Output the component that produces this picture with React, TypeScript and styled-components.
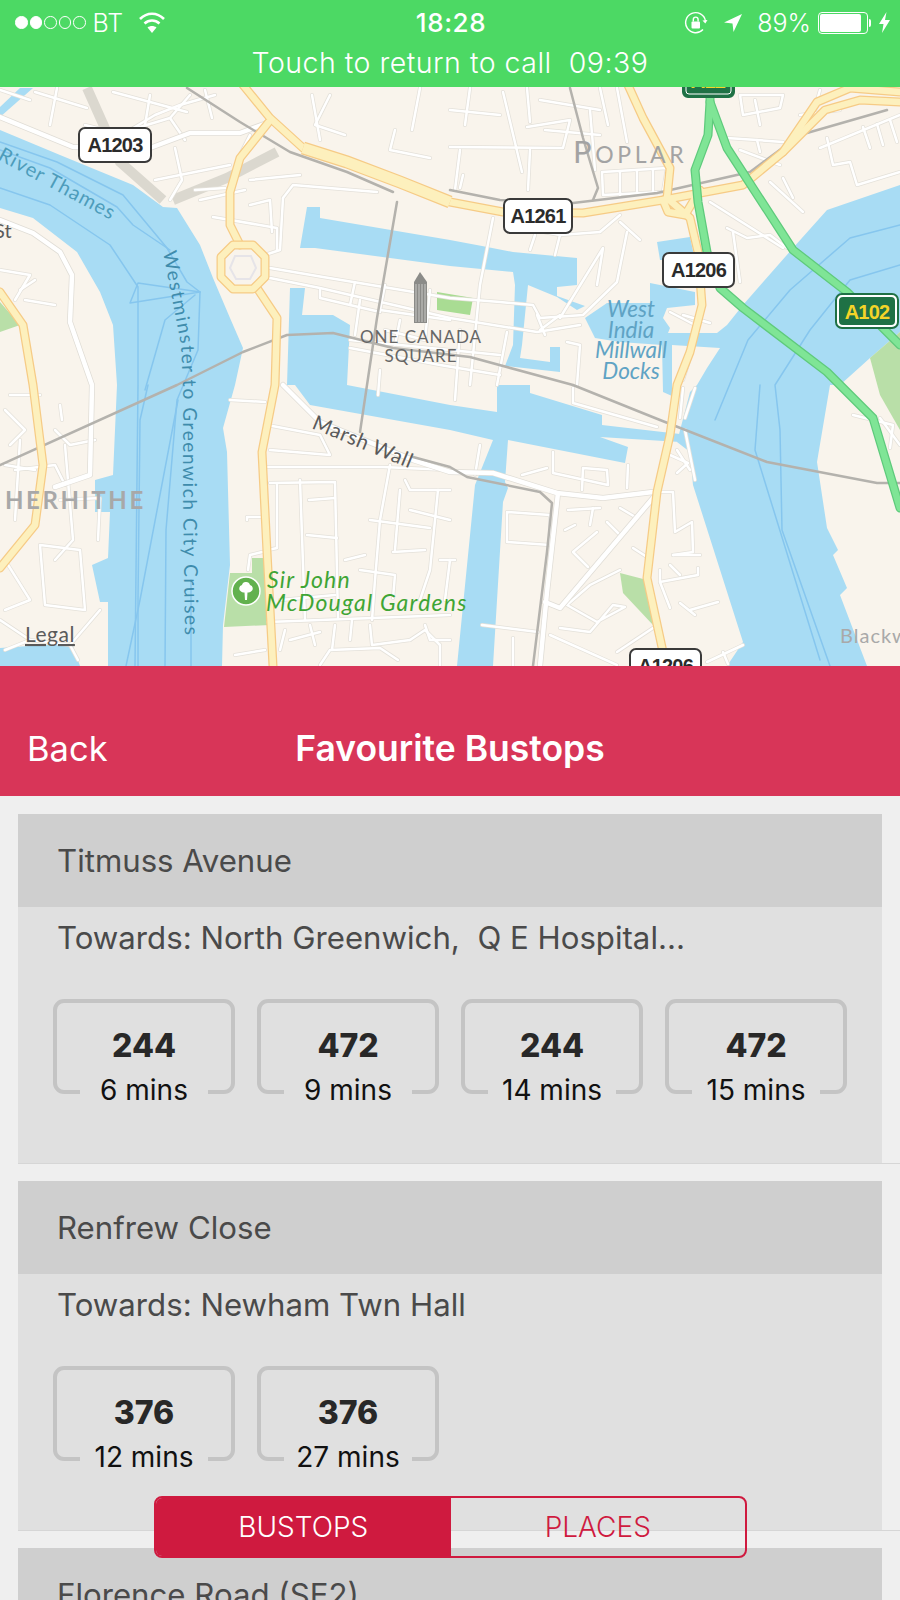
import React from "react";
import styled, { createGlobalStyle } from "styled-components";

const GlobalStyle = createGlobalStyle`
  html, body {
    margin: 0;
    padding: 0;
    background: #efefef;
    font-family: Inter, "Liberation Sans", sans-serif;
  }
`;

const Page = styled.div`
  position: relative;
  width: 900px;
  height: 1600px;
  overflow: hidden;
  background: #efefef;
`;

const CallBar = styled.div`
  height: 87px;
  background: #4cd964;
  color: #fff;
  display: flex;
  flex-direction: column;
`;

const StatusRow = styled.div`
  height: 45px;
  display: grid;
  grid-template-columns: 1fr auto 1fr;
  align-items: center;
  padding: 0 10px 0 15px;
`;

const StatusGroup = styled.div<{ $end?: boolean }>`
  display: flex;
  align-items: center;
  justify-content: ${(p) => (p.$end ? "flex-end" : "flex-start")};
`;

const Dot = styled.span<{ $on?: boolean }>`
  width: 12.5px;
  height: 12.5px;
  margin-right: 2px;
  border-radius: 50%;
  box-sizing: border-box;
  border: 1px solid #fff;
  background: ${(p) => (p.$on ? "#fff" : "transparent")};
`;

const Carrier = styled.span`
  font-size: 25px;
  font-weight: 300;
  margin: 0 15px 0 5px;
`;

const Clock = styled.span`
  font-size: 26px;
  font-weight: 500;
  letter-spacing: 0.6px;
  margin-left: -3px;
`;

const Percent = styled.span`
  font-size: 25px;
  font-weight: 300;
  margin: 0 7px 0 15px;
`;

const Battery = styled.span`
  position: relative;
  box-sizing: border-box;
  width: 50px;
  height: 22px;
  padding: 1px;
  border: 1px solid #fff;
  border-radius: 4px;
  display: block;
  margin-right: 11px;

  &::before {
    content: "";
    display: block;
    height: 100%;
    width: 90%;
    background: #fff;
    border-radius: 2px;
  }

  &::after {
    content: "";
    position: absolute;
    right: -4px;
    top: 6px;
    width: 2px;
    height: 8px;
    background: #fff;
    border-radius: 0 2px 2px 0;
  }
`;

const CallText = styled.div`
  text-align: center;
  font-size: 28.5px;
  line-height: 36px;
  font-weight: 300;
  letter-spacing: 0.5px;
  white-space: pre;
`;

const MapFrame = styled.div`
  height: 579px;
  background: #f9f4ec;
  overflow: hidden;

  svg {
    display: block;
  }
`;

const MapLabel = styled.text<{
  $size: number;
  $color: string;
  $italic?: boolean;
  $weight?: number;
  $spacing?: number;
}>`
  font-family: Lato, "Open Sans", sans-serif;
  font-size: ${(p) => p.$size}px;
  fill: ${(p) => p.$color};
  font-style: ${(p) => (p.$italic ? "italic" : "normal")};
  font-weight: ${(p) => p.$weight ?? 400};
  letter-spacing: ${(p) => p.$spacing ?? 0}px;
`;

const SignText = styled.text<{ $color: string }>`
  font-family: "Liberation Sans", sans-serif;
  font-size: 20px;
  font-weight: 700;
  letter-spacing: -0.8px;
  text-anchor: middle;
  fill: ${(p) => p.$color};
`;

const NavBar = styled.header`
  height: 130px;
  box-sizing: border-box;
  background: #d83558;
  color: #fff;
  display: grid;
  grid-template-columns: 1fr auto 1fr;
  align-items: end;
  padding: 0 27px 25px;
`;

const BackLink = styled.span`
  font-size: 34.5px;
  line-height: 44px;
  font-weight: 400;
`;

const NavTitle = styled.h1`
  margin: 0;
  font-size: 35.5px;
  line-height: 44px;
  font-weight: 600;
`;

const List = styled.main`
  padding: 18px 0 0 18px;
  display: flex;
  flex-direction: column;
  gap: 17px;
`;

const StopRow = styled.section`
  border-bottom: 1px solid #d6d6d6;
  padding-right: 18px;
`;

const StopCard = styled.div`
  height: 349px;
  background: #e0e0e0;
`;

const StopName = styled.div`
  height: 93px;
  padding-left: 39px;
  display: flex;
  align-items: center;
  background: #cfcfcf;
  color: #4a4a4a;
  font-size: 31.2px;
`;

const Towards = styled.div`
  height: 62px;
  padding-left: 39px;
  display: flex;
  align-items: center;
  color: #4a4a4a;
  font-size: 31.2px;
  white-space: pre;
`;

const Departures = styled.div`
  display: flex;
  gap: 22px;
  margin: 30px 0 0 35px;
`;

const Departure = styled.div`
  position: relative;
  box-sizing: border-box;
  width: 182px;
  height: 95px;
  border: 4px solid #c4c4c4;
  border-radius: 11px;
  text-align: center;
`;

const Route = styled.div`
  margin-top: 25px;
  font-size: 32px;
  line-height: 36px;
  font-weight: 800;
  color: #282828;
`;

const Minutes = styled.div`
  position: absolute;
  left: 23px;
  right: 23px;
  bottom: -18px;
  height: 36px;
  line-height: 36px;
  background: #e0e0e0;
  color: #111;
  font-size: 28px;
`;

const Segments = styled.div`
  position: absolute;
  left: 154px;
  top: 1496px;
  width: 593px;
  height: 62px;
  box-sizing: border-box;
  display: flex;
  border: 2px solid #cf1a3f;
  border-radius: 8px;
  overflow: hidden;
`;

const Segment = styled.div<{ $active?: boolean }>`
  flex: 1;
  display: flex;
  align-items: center;
  justify-content: center;
  font-size: 28px;
  font-weight: 300;
  color: ${(p) => (p.$active ? "#fff" : "#cf1a3f")};
  background: ${(p) => (p.$active ? "#cf1a3f" : "transparent")};
`;

const WATER = [
  "M0,130 L60,155 L133,185 L163,207 L177,208 L200,245 L213,278 L230,318 L243,348 L235,385 L223,428 L227,452 L230,565 L223,625 L222,666 L108,666 L108,602 L100,602 L92,565 L108,558 L110,512 L95,512 L95,480 L113,475 L117,385 L113,325 L100,292 L77,252 L33,218 L0,208 Z",
  "M0,107 L20,88 L33,88 L0,117 Z",
  "M0,648 L72,643 L80,666 L0,666 Z",
  "M900,185 L827,210 L793,248 L743,305 L727,325 L717,333 L720,348 L707,368 L697,385 L690,392 L677,442 L690,452 L693,485 L743,642 L727,666 L867,666 L840,595 L847,588 L833,555 L838,550 L827,528 L817,462 L830,385 L840,385 L870,358 L900,332 Z",
  "M307,207 L320,207 L320,218 L450,240 L482,246 L513,252 L577,258 L577,285 L557,287 L557,296 L585,306 L577,310 L557,297 L528,285 L522,345 L520,358 L550,362 L550,347 L560,347 L560,372 L505,366 L513,345 L515,285 L513,272 L450,266 L315,248 L300,248 Z",
  "M290,288 L305,288 L302,315 L333,315 L350,325 L347,385 L450,405 L497,412 L497,385 L530,385 L530,393 L602,415 L602,425 L680,434 L680,442 L600,437 L628,447 L625,463 L508,440 L505,482 L508,488 L503,502 L493,666 L457,666 L475,485 L493,440 L450,430 L310,405 L295,385 L287,385 Z",
  "M585,318 L607,303 L650,303 L650,283 L695,292 L695,305 L667,308 L663,318 L670,328 L668,333 L720,333 L720,348 L672,345 L672,396 L663,392 L662,345 L620,342 L595,338 Z",
  "M657,242 L690,237 L695,260 L660,260 Z",
];

const PARKS = [
  "M230,573 L252,573 L252,558 L265,558 L270,625 L224,627 Z",
  "M0,302 L20,325 L0,332 Z",
  "M620,573 L647,580 L653,625 L623,593 Z",
  "M870,358 L900,332 L900,430 L880,395 Z",
];

const SHIP_LINES = [
  "M0,142 L57,162 L123,195 L167,248 L187,282 L200,292",
  "M0,150 L50,168 L117,207 L133,225 L170,250",
  "M0,188 L50,205 L110,245 L138,287 L138,385 L135,666",
  "M200,292 L130,303 L138,283 L200,292 M195,295 L165,320 L145,390",
  "M200,292 L198,350 L177,400 L166,530 L165,666",
  "M178,400 L140,600 L126,666",
  "M191,580 L191,666",
  "M148,385 L140,420 L138,600 L138,666",
  "M900,225 L850,238 L790,290 L748,340 L715,420",
  "M900,265 L850,280 L810,330 L775,385 L780,430 L782,530 L830,666",
  "M760,385 L755,450 L820,660",
];

const RAILS = [
  "M187,88 L240,122 L290,152 L347,172 L393,192",
  "M397,202 L377,318 L367,385 L360,432",
  "M0,465 L177,385 L243,352 L287,335 L333,333 L393,348 L470,357 L573,385 L660,420 L767,462 L877,483 L900,483",
  "M450,190 L500,200 L573,203 L657,193 L750,172 L800,135 L887,110",
  "M570,88 L583,138 L598,188 L593,200",
  "M413,457 L450,467 L467,477 L540,492 L552,503 L547,552 L533,666",
];

const STREETS = [
  "M35,92 L87,108", "M57,88 L50,125", "M113,92 L150,102 L187,112", "M190,95 L170,118 L185,140",
  "M130,130 L155,115 L180,105 L215,95", "M175,148 L182,180 L170,200", "M155,180 L180,175 L230,165",
  "M195,190 L225,188", "M200,200 L245,190", "M240,155 L250,135", "M250,180 L300,175",
  "M213,217 L277,228 L277,250", "M283,198 L293,185 L377,192", "M283,198 L280,250 L265,255",
  "M250,205 L270,200 L272,232", "M312,95 L320,140", "M330,95 L315,125 L345,135", "M420,88 L412,130",
  "M395,130 L390,150 L430,158", "M0,270 L30,275 L15,300", "M35,280 L20,290", "M25,300 L55,305",
  "M10,395 L40,395", "M60,405 L62,420", "M5,465 L35,470", "M15,470 L55,465 L65,485",
  "M40,545 L80,550 L85,610 L45,605 Z", "M5,560 L30,600 L5,610", "M0,620 L30,640 L70,645 L100,610",
  "M30,640 L5,650", "M70,645 L78,660", "M230,400 L265,402", "M267,425 L320,435 L330,455 L270,450",
  "M268,467 L337,467 L383,467 L450,470", "M270,483 L335,482 L338,618", "M277,485 L277,548 L268,550",
  "M309,500 L335,498", "M307,535 L337,538", "M247,520 L247,517 L262,517", "M248,570 L250,555 L262,552",
  "M390,465 L380,520 L375,580 L372,620", "M370,520 L430,528", "M405,480 L410,490 L450,490",
  "M438,490 L430,570 L420,600", "M360,570 L395,575 L393,598", "M393,552 L425,550", "M268,622 L450,615",
  "M265,650 L235,655", "M285,630 L280,650", "M310,625 L315,645", "M320,665 L330,650 L380,648 L398,660",
  "M335,625 L332,650", "M370,625 L372,645 L410,640", "M425,625 L430,640 L450,640", "M410,640 L425,630 L440,645 L440,666",
  "M430,290 L425,340 L385,330", "M450,320 L380,310 L385,285", "M355,282 L350,305", "M320,290 L320,298 L380,312",
  "M270,268 L323,277 L450,298 L500,302 L533,305 L540,318 L583,315 L617,282 L627,232",
  "M270,278 L320,288 L450,318 L537,332 L580,325", "M493,218 L480,285 L470,385", "M507,332 L497,385",
  "M567,342 L580,345 L577,385", "M537,315 L545,335", "M540,330 L560,315", "M560,318 L603,248 L597,285",
  "M350,340 L500,355", "M450,147 L563,148 L570,120 L527,127", "M503,92 L522,172", "M527,88 L530,122",
  "M617,88 L627,142", "M463,175 L460,188", "M602,172 L667,168 L663,192 L603,195 Z", "M620,172 L620,195",
  "M637,171 L637,194", "M653,170 L653,193", "M740,95 L783,95 L780,108 L743,115 Z", "M727,138 L757,140 L783,142",
  "M760,152 L757,140", "M827,138 L833,165 L850,162 L857,185 L900,172", "M820,148 L900,115",
  "M863,127 L870,148", "M877,124 L883,145", "M890,120 L897,142", "M770,182 L803,212", "M783,178 L793,198",
  "M710,202 L783,248", "M727,228 L747,238 L770,235 L787,248", "M733,232 L740,282", "M683,315 L710,323",
  "M670,312 L695,325", "M693,348 L683,380", "M677,450 L690,470", "M660,492 L673,492 L675,532 L692,522 L693,552 L673,555",
  "M673,555 L700,555", "M670,565 L680,575", "M698,568 L698,575 L660,582 L660,570", "M660,582 L670,608",
  "M680,603 L695,615", "M718,602 L690,610", "M507,512 L550,515 L550,545 L507,542 Z", "M593,508 L590,525",
  "M568,510 L600,508", "M565,530 L575,525", "M620,508 L637,518", "M607,522 L620,535", "M597,532 L573,552 L588,567",
  "M633,548 L647,557", "M620,570 L590,585 L567,605 L597,622 L625,607 L613,605 L590,632 L560,628",
  "M550,635 L617,665", "M653,628 L617,652", "M482,625 L538,632", "M513,638 L513,666",
  "M707,662 L743,645", "M723,652 L728,664", "M522,475 L547,468", "M553,452 L553,473 L608,485 L607,470 L583,468 L582,490",
  "M628,465 L627,488", "M480,445 L475,475", "M573,388 L573,403 L657,427", "M683,388 L680,418", "M695,388 L685,418",
  "M670,455 L688,463 L677,473", "M853,415 L893,425 L890,448", "M880,418 L900,445",
  "M0,90 L30,100", "M85,125 L125,135", "M150,95 L145,125", "M205,90 L212,118", "M170,118 L130,130",
  "M5,410 L25,430 L10,445", "M55,430 L70,445 L95,440", "M65,445 L73,540 L55,560", "M60,500 L100,498 L98,540",
  "M20,440 L15,520", "M300,480 L305,620", "M280,600 L335,595", "M345,560 L365,555", "M400,490 L395,550",
  "M410,510 L450,520", "M440,560 L455,560", "M445,600 L450,560", "M350,640 L352,620", "M290,640 L320,632",
  "M360,300 L355,335", "M400,320 L395,345", "M460,330 L455,400", "M350,348 L440,365 L500,375", "M380,370 L378,395",
  "M450,110 L500,115", "M470,88 L465,125", "M540,100 L600,110", "M545,130 L600,135", "M590,110 L595,170",
  "M460,150 L455,190", "M530,150 L528,190", "M600,88 L608,125", "M755,100 L760,125", "M800,115 L840,110",
  "M820,90 L810,125", "M740,150 L780,165", "M505,225 L560,235 L600,232", "M535,235 L530,250", "M560,235 L555,255",
  "M600,232 L620,215", "M620,222 L640,240", "M685,430 L695,480",
];

const WIDE_STREETS = [
  "M0,117 L73,147 L150,148 L190,133 L240,133 L267,123",
  "M0,220 L33,233 L60,252 L72,275 L70,322 L92,385 L90,475 L55,487",
  "M283,385 L320,422 L413,460 L450,472 L493,473 L557,493 L603,498 L653,492",
  "M653,498 L560,608 L545,602",
  "M558,493 L547,592 L540,666",
];

const MAIN_ROADS = [
  "M243,85 L270,118 L303,148 L347,162 L400,182 L450,202 L503,212 L583,213 L663,200 L743,185 L783,152 L817,102 L850,88 L900,92",
  "M268,123 L240,158 L230,192 L230,225 L240,245",
  "M257,288 L277,318 L275,385 L262,452 L267,552 L273,666",
  "M0,292 L23,325 L33,385 L43,465 L35,525 L0,568",
  "M628,85 L643,118 L670,168 L667,198 L690,218 L698,252 L702,305 L690,352 L677,385 L670,435 L657,492 L647,578 L663,652",
  "M663,200 L668,212 L685,215 L700,190",
  "M783,152 L825,110 L860,100 L900,102",
];

const DUAL_CARRIAGEWAY = "M303,148 L347,162 L400,182 L450,202";

const ROUNDABOUT = "M233,245 L253,245 L265,257 L265,277 L253,289 L233,289 L221,277 L221,257 Z";

const GREEN_ROADS = [
  "M710,87 L710,102 L708,135 L695,170 L698,202 L707,252 L720,288 L743,308 L827,372 L873,418 L900,508",
  "M710,102 L727,148 L793,250 L847,292 L900,345",
];

const ROAD_SIGNS = [
  { label: "A1203", x: 78, y: 127, w: 74 },
  { label: "A1261", x: 503, y: 198, w: 70 },
  { label: "A1206", x: 662, y: 252, w: 73 },
  { label: "A1206", x: 629, y: 648, w: 73 },
];

const Strokes = ({ items, color, width }: { items: string[]; color: string; width: number }) => (
  <g fill="none" stroke={color} strokeWidth={width} strokeLinejoin="round" strokeLinecap="round">
    {items.map((d, i) => (
      <path key={i} d={d} />
    ))}
  </g>
);

const CityMap = () => (
  <MapFrame>
    <svg width="900" height="579" viewBox="0 87 900 579">
      <defs>
        <path id="thamesPath" d="M-3,159 L118,224" />
        <path id="cruisePath" d="M163,252 L181,345 L183,385 L183,500 L185,640" />
        <path id="marshPath" d="M311,428 L413,470" />
      </defs>
      <g fill="#a8dcf4">
        {WATER.map((d, i) => (
          <path key={i} d={d} />
        ))}
      </g>
      <g fill="#b9dfa8">
        {PARKS.map((d, i) => (
          <path key={i} d={d} />
        ))}
      </g>
      <path d="M437,292 L473,298 L470,315 L437,310 Z" fill="#a9dc93" />
      <Strokes items={SHIP_LINES} color="#86c6ee" width={1.5} />
      <path d="M87,88 L120,162 L163,200 M173,200 L227,178 L277,152" fill="none" stroke="#dbd8cf" strokeWidth={10} />
      <Strokes items={STREETS} color="#e4e1da" width={4} />
      <Strokes items={STREETS} color="#ffffff" width={2.5} />
      <Strokes items={WIDE_STREETS} color="#e0ddd6" width={6} />
      <Strokes items={WIDE_STREETS} color="#ffffff" width={4.5} />
      <Strokes items={RAILS} color="#b4b2ad" width={2.5} />
      <Strokes items={MAIN_ROADS} color="#f6cb86" width={9} />
      <Strokes items={MAIN_ROADS} color="#fdf0bd" width={6.5} />
      <path d={DUAL_CARRIAGEWAY} fill="none" stroke="#f6cb86" strokeWidth={13} />
      <path d={DUAL_CARRIAGEWAY} fill="none" stroke="#fdf0bd" strokeWidth={10.5} />
      <path d={ROUNDABOUT} fill="none" stroke="#f6cb86" strokeWidth={9} strokeLinejoin="round" />
      <path d={ROUNDABOUT} fill="none" stroke="#fdf0bd" strokeWidth={6.5} strokeLinejoin="round" />
      <path d="M235,256 L251,256 L256,268 L250,279 L236,279 L230,268 Z" fill="none" stroke="#e6e4e8" strokeWidth={2} />
      <Strokes items={GREEN_ROADS} color="#5fca7c" width={9} />
      <Strokes items={GREEN_ROADS} color="#7fe596" width={6.5} />

      <g>
        <path d="M414,323 L414,282 L420,272 L427,282 L427,323 Z" fill="#8b8b88" />
        <path d="M416,284 V322 M419,284 V322 M422,284 V322 M425,284 V322" stroke="#c9c9c6" strokeWidth={1} />
      </g>

      <MapLabel $size={20} $color="#4d9cbb" $spacing={1}>
        <textPath href="#thamesPath">River Thames</textPath>
      </MapLabel>
      <MapLabel x={-6} y={238} $size={20} $color="#5c5c5c">St</MapLabel>
      <MapLabel $size={19} $color="#3f8cac" $spacing={0.3}>
        <textPath href="#cruisePath" textLength="385">Westminster to Greenwich City Cruises</textPath>
      </MapLabel>
      <MapLabel x={573} y={163} $size={31} $color="#a3a3a3" $spacing={3.6}>
        P<tspan fontSize="23">OPLAR</tspan>
      </MapLabel>
      <MapLabel x={421} y={343} $size={17} $color="#666" $spacing={1} textAnchor="middle">ONE CANADA</MapLabel>
      <MapLabel x={421} y={362} $size={17} $color="#666" $spacing={1} textAnchor="middle">SQUARE</MapLabel>
      <MapLabel x={631} y={317} $size={22.5} $color="#5fa3c4" $italic textAnchor="middle">West</MapLabel>
      <MapLabel x={631} y={338} $size={22.5} $color="#5fa3c4" $italic textAnchor="middle">India</MapLabel>
      <MapLabel x={631} y={358} $size={22.5} $color="#5fa3c4" $italic textAnchor="middle">Millwall</MapLabel>
      <MapLabel x={631} y={379} $size={22.5} $color="#5fa3c4" $italic textAnchor="middle">Docks</MapLabel>
      <MapLabel $size={20.5} $color="#5a5a5a" $spacing={0.5}>
        <textPath href="#marshPath">Marsh Wall</textPath>
      </MapLabel>
      <MapLabel x={5} y={509} $size={24} $weight={700} $color="#a8a8a8" $spacing={2.6}>HERHITHE</MapLabel>
      <circle cx={246} cy={591} r={14} fill="#62b14e" stroke="#fff" strokeWidth={1.5} />
      <path d="M246,582 a4,4 0 0 1 4,3 a3.5,3.5 0 0 1 1,6.5 a4,4 0 0 1 -3.5,1 L247,600 L245,600 L244.5,592.500 a4,4 0 0 1 -3.500,-1 a3.500,3.500 0 0 1 1,-6.500 a4,4 0 0 1 4.500,-3 Z" fill="#fff" />
      <MapLabel x={267} y={588} $size={23} $color="#3fa535" $italic $spacing={1.2}>Sir John</MapLabel>
      <MapLabel x={266} y={611} $size={23} $color="#3fa535" $italic $spacing={1.2}>McDougal Gardens</MapLabel>
      <MapLabel x={25} y={642} $size={21} $color="#5a5a5a" $spacing={0.5} textDecoration="underline">Legal</MapLabel>
      <MapLabel x={840} y={643} $size={20} $color="#a9a9a9" $spacing={1}>Blackw</MapLabel>

      {ROAD_SIGNS.map((s, i) => (
        <g key={i}>
          <rect x={s.x + 1} y={s.y + 1} width={s.w - 2} height={34} rx={6} fill="#fff" stroke="#3a3a3a" strokeWidth={2} />
          <SignText x={s.x + s.w / 2} y={s.y + 25} $color="#2b2b2b">{s.label}</SignText>
        </g>
      ))}
      <rect x={683} y={64} width={51} height={33} rx={5} fill="#1f7145" stroke="#1f7145" strokeWidth={2} />
      <rect x={686} y={66} width={45} height={28} rx={3} fill="none" stroke="#fff" strokeWidth={1} />
      <SignText x={708} y={88} $color="#f4d428">A12</SignText>
      <rect x={836} y={294} width={62} height={34} rx={6} fill="#fff" stroke="#1f7145" strokeWidth={2} />
      <rect x={839} y={297} width={56} height={28} rx={4} fill="#1f7145" />
      <SignText x={867} y={319} $color="#f4d428">A102</SignText>
    </svg>
  </MapFrame>
);

const StatusBar = () => (
  <StatusRow>
    <StatusGroup>
      <Dot $on />
      <Dot $on />
      <Dot />
      <Dot />
      <Dot />
      <Carrier>BT</Carrier>
      <svg width="28" height="22" viewBox="0 0 28 22" fill="none" stroke="#fff" strokeWidth="2.6">
        <path d="M2,7 C9,0 19,0 26,7" />
        <path d="M6.500,11.500 C11,7.500 17,7.500 21.500,11.500" />
        <path d="M14,21 L9.500,15.500 C12,13.500 16,13.500 18.500,15.500 Z" fill="#fff" stroke="none" />
      </svg>
    </StatusGroup>
    <Clock>18:28</Clock>
    <StatusGroup $end>
      <svg width="24" height="24" viewBox="0 0 24 24" fill="none" stroke="#fff" strokeWidth="1.4">
        <path d="M19,18.500 A10,10 0 1 1 21.500,10" />
        <path d="M23.500,9 L21.300,12.500 L18.500,9.500 Z" fill="#fff" stroke="none" />
        <rect x="7.500" y="10.500" width="8.500" height="7" rx="1" fill="#fff" stroke="none" />
        <path d="M9.300,10.500 V8.500 a2.400,2.400 0 0 1 4.800,0 V10.500" />
      </svg>
      <svg width="18" height="18" viewBox="0 0 18 18" style={{ marginLeft: 16 }}>
        <path d="M18,0 L0,8.500 L8.500,9.500 L9.500,18 Z" fill="#fff" />
      </svg>
      <Percent>89%</Percent>
      <Battery />
      <svg width="11" height="21" viewBox="0 0 11 21">
        <path d="M7.500,0 L0,12 L4.500,12 L3,21 L11,8 L6,8 Z" fill="#fff" />
      </svg>
    </StatusGroup>
  </StatusRow>
);

const STOPS = [
  {
    name: "Titmuss Avenue",
    towards: "Towards: North Greenwich,  Q E Hospital...",
    departures: [
      { route: "244", mins: "6 mins" },
      { route: "472", mins: "9 mins" },
      { route: "244", mins: "14 mins" },
      { route: "472", mins: "15 mins" },
    ],
  },
  {
    name: "Renfrew Close",
    towards: "Towards: Newham Twn Hall",
    departures: [
      { route: "376", mins: "12 mins" },
      { route: "376", mins: "27 mins" },
    ],
  },
  { name: "Florence Road (SE2)", towards: "", departures: [] },
];

export default function App() {
  return (
    <Page>
      <GlobalStyle />
      <CallBar>
        <StatusBar />
        <CallText>Touch to return to call  09:39</CallText>
      </CallBar>
      <CityMap />
      <NavBar>
        <BackLink>Back</BackLink>
        <NavTitle>Favourite Bustops</NavTitle>
      </NavBar>
      <List>
        {STOPS.map((stop) => (
          <StopRow key={stop.name}>
            <StopCard>
              <StopName>{stop.name}</StopName>
              <Towards>{stop.towards}</Towards>
              <Departures>
                {stop.departures.map((d, i) => (
                  <Departure key={i}>
                    <Route>{d.route}</Route>
                    <Minutes>{d.mins}</Minutes>
                  </Departure>
                ))}
              </Departures>
            </StopCard>
          </StopRow>
        ))}
      </List>
      <Segments>
        <Segment $active>BUSTOPS</Segment>
        <Segment>PLACES</Segment>
      </Segments>
    </Page>
  );
}
